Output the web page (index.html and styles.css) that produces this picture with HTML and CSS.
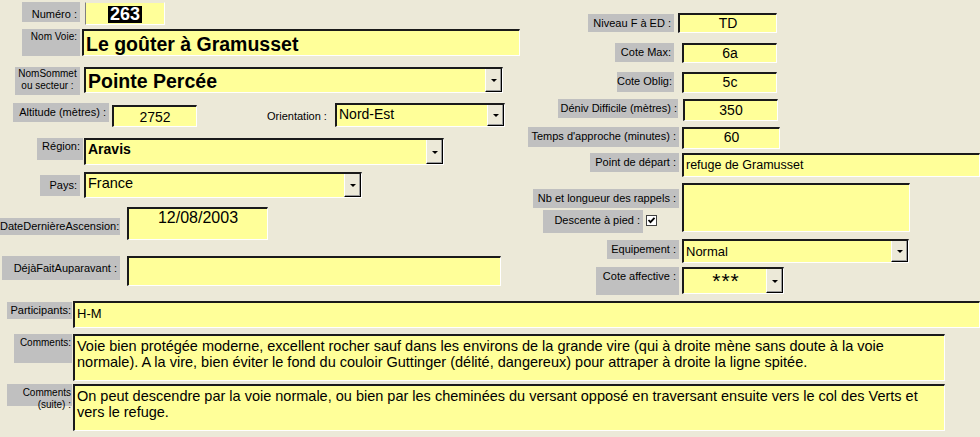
FILE: index.html
```html
<!DOCTYPE html>
<html lang="fr">
<head>
<meta charset="utf-8">
<title>Voie</title>
<link rel="stylesheet" href="styles.css">
</head>
<body>
<div class="form">
  <div class="top">
    <div class="col-left">
      <div class="row r-numero">
        <div class="lbl l-numero">Numéro :</div>
        <div class="fld f-numero center"><span class="sel">263</span></div>
      </div>
      <div class="row r-nomvoie">
        <div class="lbl l-nomvoie small">Nom Voie:</div>
        <div class="fld f-nomvoie big">Le goûter à Gramusset</div>
      </div>
      <div class="row r-sommet">
        <div class="lbl l-sommet small">NomSommet<br>ou secteur :</div>
        <div class="fld combo f-sommet"><span class="txt big">Pointe Percée</span><span class="btn"></span></div>
      </div>
      <div class="row r-altitude">
        <div class="lbl l-altitude">Altitude (mètres) :</div>
        <div class="fld f-altitude center">2752</div>
        <div class="plain l-orient">Orientation :</div>
        <div class="fld combo f-orient"><span class="txt">Nord-Est</span><span class="btn"></span></div>
      </div>
      <div class="row r-region">
        <div class="lbl l-region">Région:</div>
        <div class="fld combo f-region"><span class="txt bold">Aravis</span><span class="btn"></span></div>
      </div>
      <div class="row r-pays">
        <div class="lbl l-pays">Pays:</div>
        <div class="fld combo f-pays"><span class="txt t145">France</span><span class="btn"></span></div>
      </div>
      <div class="row r-date">
        <div class="lbl l-date">DateDernièreAscension:</div>
        <div class="fld f-date center">12/08/2003</div>
      </div>
      <div class="row r-deja">
        <div class="lbl l-deja">DéjàFaitAuparavant :</div>
        <div class="fld f-deja"></div>
      </div>
    </div>
    <div class="col-right">
      <div class="row r-niveau">
        <div class="lbl l-niveau">Niveau F à ED :</div>
        <div class="fld f-niveau center">TD</div>
      </div>
      <div class="row r-cotemax">
        <div class="lbl l-cotemax">Cote Max:</div>
        <div class="fld f-grade center">6a</div>
      </div>
      <div class="row r-coteoblig">
        <div class="lbl l-coteoblig">Cote Oblig:</div>
        <div class="fld f-grade f-oblig center">5c</div>
      </div>
      <div class="row r-deniv">
        <div class="lbl l-deniv">Déniv Difficile (mètres) :</div>
        <div class="fld f-deniv center">350</div>
      </div>
      <div class="row r-temps">
        <div class="lbl l-temps">Temps d'approche (minutes) :</div>
        <div class="fld f-temps center">60</div>
      </div>
      <div class="row r-point">
        <div class="lbl l-point">Point de départ :</div>
        <div class="fld f-point">refuge de Gramusset</div>
      </div>
      <div class="row r-rappels">
        <div class="stack">
          <div class="lbl l-rappels">Nb et longueur des rappels :</div>
          <div class="descente">
            <div class="lbl l-descente">Descente à pied :</div>
            <svg class="check" width="11" height="11" viewBox="0 0 11 11">
              <rect x="0.5" y="0.5" width="10" height="10" fill="#fff" stroke="#404040"/>
              <path d="M2.5 5 L4.5 7.2 L8.5 2.8" fill="none" stroke="#000" stroke-width="1.8"/>
            </svg>
          </div>
        </div>
        <div class="fld f-rappels"></div>
      </div>
      <div class="row r-equip">
        <div class="lbl l-equip">Equipement :</div>
        <div class="fld combo f-equip"><span class="txt t13">Normal</span><span class="btn"></span></div>
      </div>
      <div class="row r-coteaff">
        <div class="lbl l-coteaff">Cote affective :</div>
        <div class="fld combo f-coteaff"><span class="txt stars">***</span><span class="btn"></span></div>
      </div>
    </div>
  </div>
  <div class="bottom">
    <div class="row r-part">
      <div class="lbl l-part">Participants:</div>
      <div class="fld f-part">H-M</div>
    </div>
    <div class="row r-comm">
      <div class="lbl l-comm small">Comments:</div>
      <div class="fld f-comm">Voie bien protégée moderne, excellent rocher sauf dans les environs de la grande vire (qui à droite mène sans doute à la voie<br>normale). A la vire, bien éviter le fond du couloir Guttinger (délité, dangereux) pour attraper à droite la ligne spitée.</div>
    </div>
    <div class="row r-suite">
      <div class="lbl l-suite small">Comments<br>(suite) :</div>
      <div class="fld f-comm">On peut descendre par la voie normale, ou bien par les cheminées du versant opposé en traversant ensuite vers le col des Verts et<br>vers le refuge.</div>
    </div>
  </div>
</div>
</body>
</html>
```

FILE: styles.css
```css
* { box-sizing: border-box; }
html, body { margin: 0; padding: 0; }
body {
  width: 980px;
  height: 437px;
  overflow: hidden;
  background: #ECE9D8;
  font-family: "Liberation Sans", Arial, sans-serif;
  color: #000;
}
.form { width: 980px; }
.top { display: flex; align-items: flex-start; }
.col-left { width: 520px; flex: none; }
.col-right { width: 460px; flex: none; }
.row { display: flex; align-items: flex-start; }

.lbl {
  flex: none;
  background: #C0C0C0;
  font-size: 11px;
  line-height: 13px;
  text-align: right;
  padding: 3px 3px 0 0;
  white-space: nowrap;
}
.lbl.small { font-size: 10px; line-height: 12px; }
.plain { flex: none; font-size: 11px; line-height: 13px; white-space: nowrap; }

.fld {
  flex: none;
  background: #FFFF99;
  border-style: solid;
  border-width: 2px 1px 1px 2px;
  border-color: #1a1a1a #ffffff #ffffff #1a1a1a;
  font-size: 14px;
  line-height: 17px;
  padding: 1px 0 0 2px;
  white-space: nowrap;
  overflow: hidden;
}
.fld.center { text-align: center; padding-left: 0; }
.combo { display: flex; align-items: stretch; padding: 0 0 0 2px; }
.combo .txt { flex: 1; padding-top: 1px; overflow: hidden; }
.btn {
  flex: none;
  width: 17px;
  background: #ECE9D8;
  border-style: solid;
  border-width: 1px;
  border-color: #ffffff #000000 #000000 #ffffff;
  box-shadow: inset -1px -1px 0 #9a9a9a;
  display: flex;
  align-items: center;
  justify-content: center;
  margin-top: -1px;
}
.btn::after {
  content: "";
  width: 0;
  height: 0;
  border-left: 3px solid transparent;
  border-right: 3px solid transparent;
  border-top: 3px solid #000;
  margin-top: 1px;
}

.big { font-size: 19.5px; font-weight: bold; line-height: 23px; }
.bold { font-weight: bold; }
.t13 { font-size: 13px; }
.t145 { font-size: 14.5px; }
.sel {
  display: inline-block;
  background: #000;
  color: #fff;
  font-weight: bold;
  font-size: 18px;
  line-height: 17px;
  padding: 0 2px;
  margin-top: 2px;
}

/* left column */
.r-numero { margin-top: 2px; }
.l-numero { margin-left: 22px; width: 58px; height: 20px; padding-top: 6px; }
.f-numero { margin-left: 5px; width: 80px; height: 23px; border-top-width: 1px; border-left-width: 1px; border-color: #ECE9D8 #fff #fff #808080; }

.r-nomvoie { margin-top: 4px; }
.l-nomvoie { margin-left: 22px; width: 58px; height: 27px; padding-top: 2px; }
.f-nomvoie { margin-left: 2px; width: 438px; height: 27px; padding-top: 2px; }

.r-sommet { margin-top: 11px; }
.l-sommet { margin-left: 15px; width: 65px; height: 28px; text-align: center; padding: 1px 0 0 0; }
.f-sommet { margin-left: 4px; width: 419px; height: 26px; }
.f-sommet .txt { padding-top: 1px; }

.r-altitude { margin-top: 8px; }
.l-altitude { margin-left: 13px; width: 96px; height: 19px; padding-top: 3px; }
.f-altitude { margin-left: 3px; margin-top: 2px; width: 85px; height: 22px; padding-top: 2px; }
.l-orient { margin-left: 70px; margin-top: 7px; width: 60px; }
.f-orient { margin-left: 8px; width: 170px; height: 24px; }

.r-region { margin-top: 11px; }
.l-region { margin-left: 37px; width: 46px; height: 22px; padding-top: 2px; }
.f-region { margin-left: 1px; width: 360px; height: 27px; }

.r-pays { margin-top: 7px; }
.l-pays { margin-left: 40px; margin-top: 3px; width: 40px; height: 21px; padding-top: 4px; }
.f-pays { margin-left: 4px; width: 278px; height: 26px; }

.r-date { margin-top: 9px; }
.l-date { margin-left: 0; margin-top: 11px; width: 120px; height: 17px; padding-top: 2px; padding-right: 1px; }
.f-date { margin-left: 7px; width: 141px; height: 33px; padding-top: 0; font-size: 16px; line-height: 18px; }

.r-deja { margin-top: 16px; }
.l-deja { margin-left: 2px; width: 118px; height: 24px; padding-top: 6px; }
.f-deja { margin-left: 7px; width: 374px; height: 30px; }

/* right column */
.r-niveau { margin-top: 13px; }
.l-niveau { margin-left: 68px; margin-top: 1px; width: 86px; height: 18px; padding-top: 3px; }
.f-niveau { margin-left: 4px; width: 99px; height: 20px; padding-top: 0; }

.r-cotemax { margin-top: 10px; }
.l-cotemax { margin-left: 95px; width: 59px; height: 19px; }
.f-grade { margin-left: 8px; width: 95px; height: 20px; padding-top: 0; }

.r-coteoblig { margin-top: 9px; }
.l-coteoblig { margin-left: 97px; width: 57px; height: 20px; }
.f-oblig { height: 21px; }

.r-deniv { margin-top: 6px; }
.l-deniv { margin-left: 38px; width: 120px; height: 19px; padding-right: 1px; }
.f-deniv { margin-left: 5px; width: 95px; height: 22px; }

.r-temps { margin-top: 6px; }
.l-temps { margin-left: 8px; width: 151px; height: 20px; }
.f-temps { margin-left: 3px; width: 98px; height: 22px; padding-top: 0; }

.r-point { margin-top: 4px; }
.l-point { margin-left: 70px; width: 89px; height: 19px; }
.f-point { margin-left: 3px; width: 298px; height: 24px; font-size: 12.5px; padding-top: 2px; }

.r-rappels { margin-top: 6px; }
.stack {
  flex: none;
  width: 162px;
  display: flex;
  flex-direction: column;
  align-items: flex-end;
  padding-right: 3px;
}
.l-rappels { margin-top: 6px; width: 146px; height: 19px; }
.descente { display: flex; align-items: flex-start; margin-top: 2px; margin-right: 22px; }
.l-descente { width: 100px; height: 23px; padding-top: 4px; }
.check { flex: none; margin-left: 3px; margin-top: 5px; display: block; }
.f-rappels { width: 228px; height: 49px; }

.r-equip { margin-top: 6px; }
.l-equip { margin-left: 87px; margin-top: 1px; width: 72px; height: 19px; }
.f-equip { margin-left: 3px; width: 227px; height: 24px; }
.f-equip .txt { padding-top: 2px; }

.r-coteaff { margin-top: 4px; }
.l-coteaff { margin-left: 76px; width: 83px; height: 28px; }
.f-coteaff { margin-left: 3px; width: 102px; height: 27px; }
.stars { text-align: center; font-size: 21px; line-height: 22px; letter-spacing: 1px; padding-top: 5px; }

/* bottom */
.bottom { margin-top: 6px; }
.l-part { margin-left: 7px; margin-top: 1px; width: 65px; height: 17px; padding-top: 2px; padding-right: 1px; }
.f-part { margin-left: 1px; width: 907px; height: 27px; font-size: 13px; padding-top: 2px; }

.r-comm { margin-top: 6px; }
.l-comm { margin-left: 14px; width: 58px; height: 29px; padding-top: 3px; padding-right: 1px; }
.f-comm { margin-left: 1px; width: 872px; height: 47px; font-size: 14.5px; line-height: 16px; padding-top: 2px; }

.r-suite { margin-top: 3px; }
.l-suite { margin-left: 7px; width: 65px; height: 22px; padding-top: 3px; padding-right: 1px; }
```
